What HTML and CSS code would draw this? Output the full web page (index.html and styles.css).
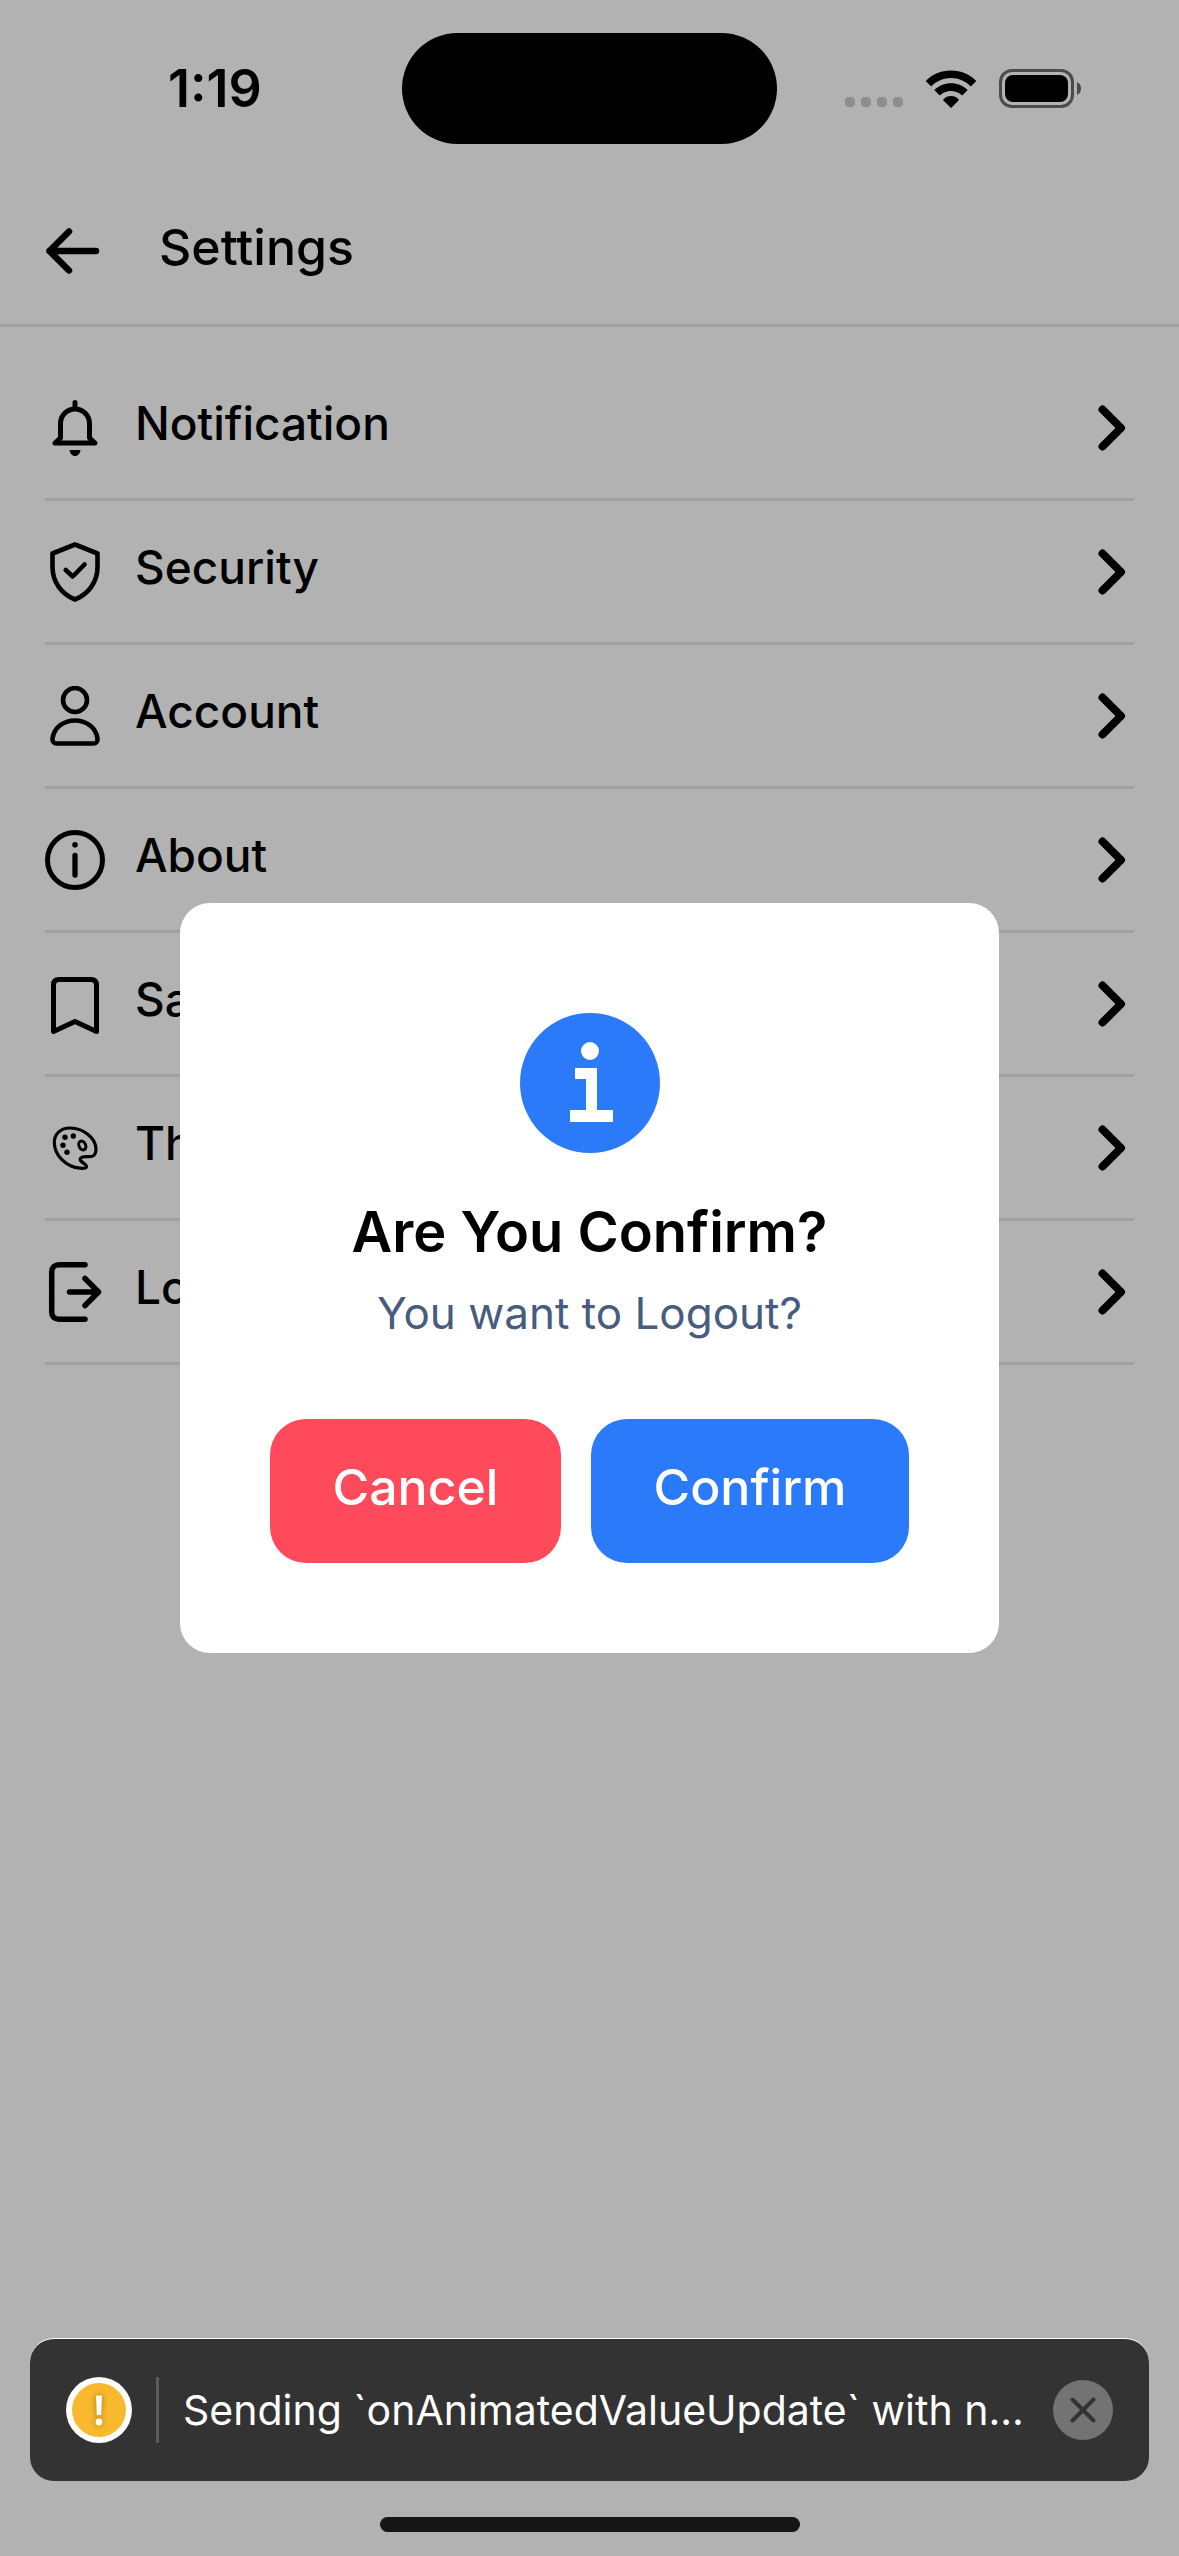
FILE: index.html
```html
<!DOCTYPE html>
<html lang="en">
<head>
<meta charset="utf-8">
<meta name="viewport" content="width=device-width, initial-scale=1">
<title>Settings</title>
<link rel="stylesheet" href="styles.css">
</head>
<body>
<div class="screen">
  <div class="status-bar">
    <time class="clock">1:19</time>
    <div class="island"></div>
    <div class="indicators">
      <svg class="signal" viewBox="0 0 58 38" aria-hidden="true"><rect y="27" width="10" height="10" rx="4"/><rect x="16" y="27" width="10" height="10" rx="4"/><rect x="32" y="27" width="10" height="10" rx="4"/><rect x="48" y="27" width="10" height="10" rx="4"/></svg>
      <svg class="wifi" viewBox="0 0 52 38" aria-hidden="true"><path d="M26 0.5C36 0.5 45 4.500 51.300 11L45.800 16.500C40.500 11 33.500 8 26 8S11.500 11 6.200 16.500L0.700 11C7 4.500 16 0.500 26 0.500z"/><path d="M26 13.200c6.500 0 12.300 2.500 16.700 6.800L37.200 25.500C34.200 22.600 30.200 21 26 21s-8.200 1.600-11.200 4.500L9.300 20c4.400-4.300 10.200-6.800 16.700-6.800z"/><path d="M26 26c2.900 0 5.500 1.100 7.500 3.300.5.500.4.900 0 1.300L26 38l-7.500-7.400c-.4-.4-.5-.8 0-1.300C20.500 27.100 23.100 26 26 26z"/></svg>
      <svg class="battery" viewBox="0 0 83 39" aria-hidden="true"><rect x="1.500" y="1.500" width="72" height="36" rx="11.500" fill="none" stroke="#6c6c6c" stroke-width="3"/><rect x="6" y="6" width="63" height="27" rx="8"/><path d="M78 13c2.700 1.300 4 3.500 4 6.500s-1.300 5.200-4 6.500z" fill="#6c6c6c"/></svg>
    </div>
  </div>

  <header class="header">
    <button class="back" type="button" aria-label="Back">
      <svg class="icon" viewBox="0 0 60 60"><path d="M51 30H4.500M24 10.500L4.500 30 24 49.500" stroke-width="6.500"/></svg>
    </button>
    <h1 class="title">Settings</h1>
  </header>

  <main class="content">
    <ul class="list">
      <li><a class="row" href="#notification">
        <svg class="icon" viewBox="0 0 60 60"><path d="M30 4.500V9M15.500 40V25.500a14.500 14.500 0 0 1 29 0V40l5.500 5H10z" stroke-width="5"/><path d="M24.500 52h11c-.5 3.500-2.500 6-5.500 6s-5-2.500-5.500-6z" fill="#000" stroke="none"/></svg>
        <span class="label">Notification</span>
        <svg class="chevron" viewBox="0 0 45 60"><path d="M13.500 11.500L32 30 13.500 48.500"/></svg>
      </a></li>
      <li><a class="row" href="#security">
        <svg class="icon" viewBox="0 0 60 60"><path d="M30 2.500L52.500 11.500V25C52.500 40 43.500 52 30 57.500 16.500 52 7.500 40 7.500 25V11.500zM20.700 28l7 6.500L39.500 22.500" stroke-width="4.600"/></svg>
        <span class="label">Security</span>
        <svg class="chevron" viewBox="0 0 45 60"><path d="M13.500 11.500L32 30 13.500 48.500"/></svg>
      </a></li>
      <li><a class="row" href="#account">
        <svg class="icon" viewBox="0 0 60 60"><circle cx="30" cy="14" r="12" stroke-width="4.600"/><path d="M7.500 52.500C9 42 18 34.500 30 34.500S51 42 52.500 52.500c.4 3-1.500 5-4 5h-37c-2.500 0-4.400-2-4-5z" stroke-width="4.600"/></svg>
        <span class="label">Account</span>
        <svg class="chevron" viewBox="0 0 45 60"><path d="M13.500 11.500L32 30 13.500 48.500"/></svg>
      </a></li>
      <li><a class="row" href="#about">
        <svg class="icon" viewBox="0 0 60 60"><circle cx="30" cy="30" r="27.500" stroke-width="5"/><circle cx="30" cy="14.700" r="2.800" fill="#000" stroke="none"/><path d="M30 25.500V45" stroke-width="5.300"/></svg>
        <span class="label">About</span>
        <svg class="chevron" viewBox="0 0 45 60"><path d="M13.500 11.500L32 30 13.500 48.500"/></svg>
      </a></li>
      <li><a class="row" href="#saved">
        <svg class="icon" viewBox="0 0 60 60"><path d="M8.500 57.500V11c0-3.500 2-5.500 5.500-5.500h32c3.500 0 5.500 2 5.500 5.500V57.500L30 47.500z" stroke-width="5"/></svg>
        <span class="label">Saved</span>
        <svg class="chevron" viewBox="0 0 45 60"><path d="M13.500 11.500L32 30 13.500 48.500"/></svg>
      </a></li>
      <li><a class="row" href="#theme">
        <svg class="icon" viewBox="0 0 60 60"><path d="M25 10C38.500 10 51 20 51 31.500c0 5-2.500 7.300-7 7.200-4 0-8-.4-8.800 2.300-.7 3 6 4.500 6.300 7.500.2 2-3.500 2-6.500 1.700C21 49.200 9.300 37 9.300 24.500 9.300 15.500 16 10 25 10z" stroke-width="3.200"/><ellipse cx="37.300" cy="27.500" rx="3.300" ry="4.600" transform="rotate(-25 37.300 27.500)" stroke-width="3"/><g fill="#000" stroke="none"><circle cx="20" cy="19.300" r="2.700"/><circle cx="28.300" cy="18" r="2.700"/><circle cx="18" cy="27.300" r="2.700"/><circle cx="22" cy="34.300" r="2.700"/></g></svg>
        <span class="label">Theme</span>
        <svg class="chevron" viewBox="0 0 45 60"><path d="M13.500 11.500L32 30 13.500 48.500"/></svg>
      </a></li>
      <li><a class="row" href="#logout">
        <svg class="icon" viewBox="0 0 60 60"><path d="M40 2.800H14C9.500 2.800 6.700 5.600 6.700 10V50c0 4.400 2.800 7.200 7.300 7.200H40M24.500 30H53M40 16.500L53.500 30 40 43.500" stroke-width="5.500"/></svg>
        <span class="label">Logout</span>
        <svg class="chevron" viewBox="0 0 45 60"><path d="M13.500 11.500L32 30 13.500 48.500"/></svg>
      </a></li>
    </ul>
  </main>

  <footer class="bottom">
    <div class="toast" role="status">
      <svg class="warning" viewBox="0 0 66 66" aria-hidden="true"><circle cx="33" cy="33" r="33" fill="#fff"/><circle cx="33" cy="33" r="27" fill="#f9b92e"/><g class="mark"><path d="M30 18.500h6l-.8 19.500h-4.400z"/><circle cx="33" cy="45" r="3.400"/></g></svg>
      <span class="divider"></span>
      <p class="message">Sending `onAnimatedValueUpdate` with n...</p>
      <button class="close" type="button" aria-label="Dismiss">
        <svg viewBox="0 0 60 60"><path d="M19.500 19.500l21 21M40.500 19.500l-21 21"/></svg>
      </button>
    </div>
    <div class="home-bar"></div>
  </footer>
</div>

<div class="overlay">
  <section class="modal" role="dialog" aria-modal="true" aria-labelledby="modal-title">
    <svg class="info" viewBox="0 0 140 140" aria-hidden="true"><circle cx="70" cy="70" r="70" fill="#2a7afa"/><circle cx="70" cy="38" r="9" fill="#fff"/><path d="M55 55H77V97H93V109H50V97H66V66H55z" fill="#fff"/></svg>
    <h2 class="modal-title" id="modal-title">Are You Confirm?</h2>
    <p class="modal-text">You want to Logout?</p>
    <div class="actions">
      <button class="btn btn-cancel" type="button">Cancel</button>
      <button class="btn btn-confirm" type="button">Confirm</button>
    </div>
  </section>
</div>
</body>
</html>
```
FILE: styles.css
```css
* {
  box-sizing: border-box;
}

body {
  margin: 0;
  background: #fff;
  color: #000;
  font-family: Inter, "Liberation Sans", sans-serif;
}

h1,
h2,
p,
ul {
  margin: 0;
  padding: 0;
}

button {
  border: 0;
  padding: 0;
  background: none;
  color: inherit;
  font: inherit;
}

svg {
  display: block;
}

.screen {
  display: flex;
  flex-direction: column;
  min-height: 100vh;
}

/* Status bar */
.status-bar {
  display: grid;
  grid-template-columns: 1fr auto 1fr;
  align-items: center;
  padding: 33px 0;
}

.clock {
  padding-left: 168px;
  font-size: 52px;
  line-height: 60px;
  font-weight: 600;
}

.island {
  width: 375px;
  height: 111px;
  border-radius: 56px;
  background: #000;
}

.indicators {
  display: flex;
  justify-content: flex-end;
  align-items: center;
  gap: 22px;
  padding-right: 97px;
}

.signal {
  width: 58px;
  height: 38px;
  fill: #cbcbcb;
}

.wifi {
  width: 52px;
  height: 38px;
}

.battery {
  width: 83px;
  height: 39px;
}

/* Header */
.header {
  display: flex;
  align-items: center;
  gap: 54px;
  height: 150px;
  padding: 0 45px;
  border-bottom: 3px solid #e5e5e5;
}

.title {
  padding-bottom: 8px;
  font-size: 50px;
  line-height: 60px;
  font-weight: 500;
}

.icon {
  flex: none;
  width: 60px;
  height: 60px;
  fill: none;
  stroke: #000;
  stroke-linecap: round;
  stroke-linejoin: round;
}

/* Settings list */
.content {
  padding: 30px 45px;
}

.list {
  list-style: none;
}

.row {
  display: flex;
  align-items: center;
  gap: 30px;
  height: 144px;
  border-bottom: 3px solid #e5e5e5;
  color: inherit;
  text-decoration: none;
}

.label {
  flex: 1;
  padding-bottom: 10px;
  font-size: 46px;
  line-height: 60px;
  font-weight: 500;
}

.chevron {
  flex: none;
  width: 45px;
  height: 60px;
  fill: none;
  stroke: #000;
  stroke-width: 8;
  stroke-linecap: round;
  stroke-linejoin: round;
}

/* Confirmation modal */
.overlay {
  position: fixed;
  inset: 0;
  z-index: 1;
  display: flex;
  align-items: center;
  justify-content: center;
  background: rgba(0, 0, 0, 0.3);
}

.modal {
  display: flex;
  flex-direction: column;
  align-items: center;
  width: 819px;
  max-width: 90%;
  padding: 110px 90px 90px;
  border-radius: 30px;
  background: #fff;
}

.info {
  width: 140px;
  height: 140px;
}

.modal-title {
  margin-top: 40px;
  font-size: 56px;
  line-height: 78px;
  font-weight: 600;
}

.modal-text {
  margin-top: 12px;
  color: #475c7e;
  font-size: 44px;
  line-height: 60px;
}

.actions {
  display: flex;
  align-self: stretch;
  gap: 30px;
  margin-top: 76px;
}

.btn {
  flex: 1 1 auto;
  height: 144px;
  padding-bottom: 8px;
  border-radius: 36px;
  color: #fff;
  font-size: 50px;
  line-height: 60px;
  font-weight: 500;
}

.btn-cancel {
  background: #ff4a5c;
}

.btn-confirm {
  background: #2a7afa;
}

/* Toast and home indicator, kept above the overlay */
.bottom {
  position: relative;
  z-index: 2;
  display: flex;
  flex-direction: column;
  align-items: center;
  gap: 36px;
  margin-top: auto;
  padding: 0 30px 24px;
}

.toast {
  display: flex;
  align-items: center;
  align-self: stretch;
  gap: 12px;
  height: 143px;
  padding: 0 36px;
  border-top: 1px solid #fff;
  border-radius: 24px;
  background: #333;
  color: #fff;
}

.warning {
  flex: none;
  width: 66px;
  height: 66px;
}

.mark {
  fill: #fff;
  filter: drop-shadow(0 0 3px rgba(0, 0, 0, 0.35));
}

.divider {
  flex: none;
  width: 3px;
  height: 66px;
  margin: 0 12px;
  background: #5c5c5c;
}

.message {
  flex: 1;
  min-width: 0;
  overflow: hidden;
  font-size: 41px;
  line-height: 60px;
  text-overflow: ellipsis;
  white-space: nowrap;
}

.close {
  flex: none;
  width: 60px;
  height: 60px;
  border-radius: 50%;
  background: #737373;
}

.close path {
  stroke: #333;
  stroke-width: 4;
  stroke-linecap: round;
}

.home-bar {
  width: 420px;
  height: 15px;
  border-radius: 8px;
  background: #161616;
}
```
